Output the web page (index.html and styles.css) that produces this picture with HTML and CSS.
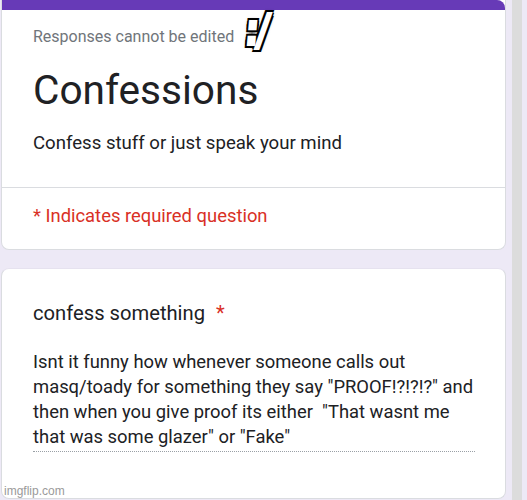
FILE: index.html
```html
<!DOCTYPE html>
<html>
<head>
<meta charset="utf-8">
<link rel="stylesheet" href="styles.css">
</head>
<body>
<div class="page">
  <div class="main">
    <div class="card header-card">
      <div class="accent"></div>
      <div class="header-top">
        <div class="note">Responses cannot be edited</div>
        <h1 class="title">Confessions</h1>
        <div class="desc">Confess stuff or just speak your mind</div>
      </div>
      <div class="header-bottom">
        <div class="required">* Indicates required question</div>
      </div>
    </div>
    <div class="card question-card">
      <div class="question">confess something <span class="star">*</span></div>
      <div class="answer">Isnt it funny how whenever someone calls out masq/toady for something they say "PROOF!?!?!?" and then when you give proof its either &nbsp;"That wasnt me that was some glazer" or "Fake"</div>
    </div>
  </div>
  <div class="scrollbar"><div class="track"></div></div>
  <div class="meme">:/</div>
  <div class="watermark">imgflip.com</div>
</div>
</body>
</html>
```
FILE: styles.css
```css
html, body {
  margin: 0;
  padding: 0;
  background: #ede9f6;
}
.page {
  position: relative;
  width: 527px;
  height: 500px;
  overflow: hidden;
  display: flex;
  font-family: Roboto, "Liberation Sans", sans-serif;
}
.main {
  width: 506px;
  padding-left: 1px;
  box-sizing: border-box;
  display: flex;
  flex-direction: column;
  gap: 18px;
}
.card {
  background: #fff;
  border-radius: 8px;
  border: 1px solid #dadce0;
  box-sizing: border-box;
}
.header-card {
  height: 250px;
  overflow: hidden;
  border-top: none;
  border-radius: 0 0 8px 8px;
}
.accent {
  height: 10px;
  background: #673ab7;
  border-radius: 0 8px 0 0;
}
.header-top {
  padding: 17px 24px 0 31px;
  height: 178px;
  box-sizing: border-box;
  border-bottom: 1px solid #dadce0;
}
.note {
  font-size: 16px;
  color: #70757a;
  line-height: 20px;
}
.title {
  margin: 18px 0 0;
  font-weight: 400;
  font-size: 40.6px;
  line-height: 50px;
  color: #202124;
}
.desc {
  margin-top: 16px;
  font-size: 18.6px;
  line-height: 24px;
  color: #202124;
}
.header-bottom {
  padding: 16px 31px;
}
.required {
  font-size: 18.4px;
  line-height: 24px;
  color: #d93025;
}
.question-card {
  height: 231px;
  padding: 31px 31px 0 31px;
  border-top: 1px solid #e6e2ef;
}
.question {
  font-size: 20.2px;
  line-height: 26px;
  color: #202124;
}
.star {
  color: #d93025;
  margin-left: 6px;
}
.answer {
  margin-top: 23px;
  width: 442px;
  font-size: 18.4px;
  line-height: 25px;
  color: #202124;
  padding-bottom: 2px;
  border-bottom: 1px dotted #9aa0a6;
}
.scrollbar {
  width: 21px;
  display: flex;
  padding-left: 6px;
}
.track {
  width: 10px;
  background: #dcdcdc;
}
.meme {
  position: absolute;
  left: 247px;
  top: 5px;
  font-family: "DejaVu Sans", sans-serif;
  font-weight: bold;
  font-size: 44px;
  line-height: 50px;
  letter-spacing: -4px;
  transform: scaleX(0.85) skewX(-6deg);
  transform-origin: left top;
  color: #fff;
  -webkit-text-stroke: 2px #fff;
  text-shadow:
    -3px -3px 0 #000, 3px -3px 0 #000, -3px 3px 0 #000, 3px 3px 0 #000,
    0 -3px 0 #000, 0 3px 0 #000, -3px 0 0 #000, 3px 0 0 #000,
    0 0 5px #000;
}
.watermark {
  position: absolute;
  left: 4px;
  top: 484px;
  font-family: "Liberation Sans", sans-serif;
  font-size: 12px;
  color: #9a9a9a;
}
```
